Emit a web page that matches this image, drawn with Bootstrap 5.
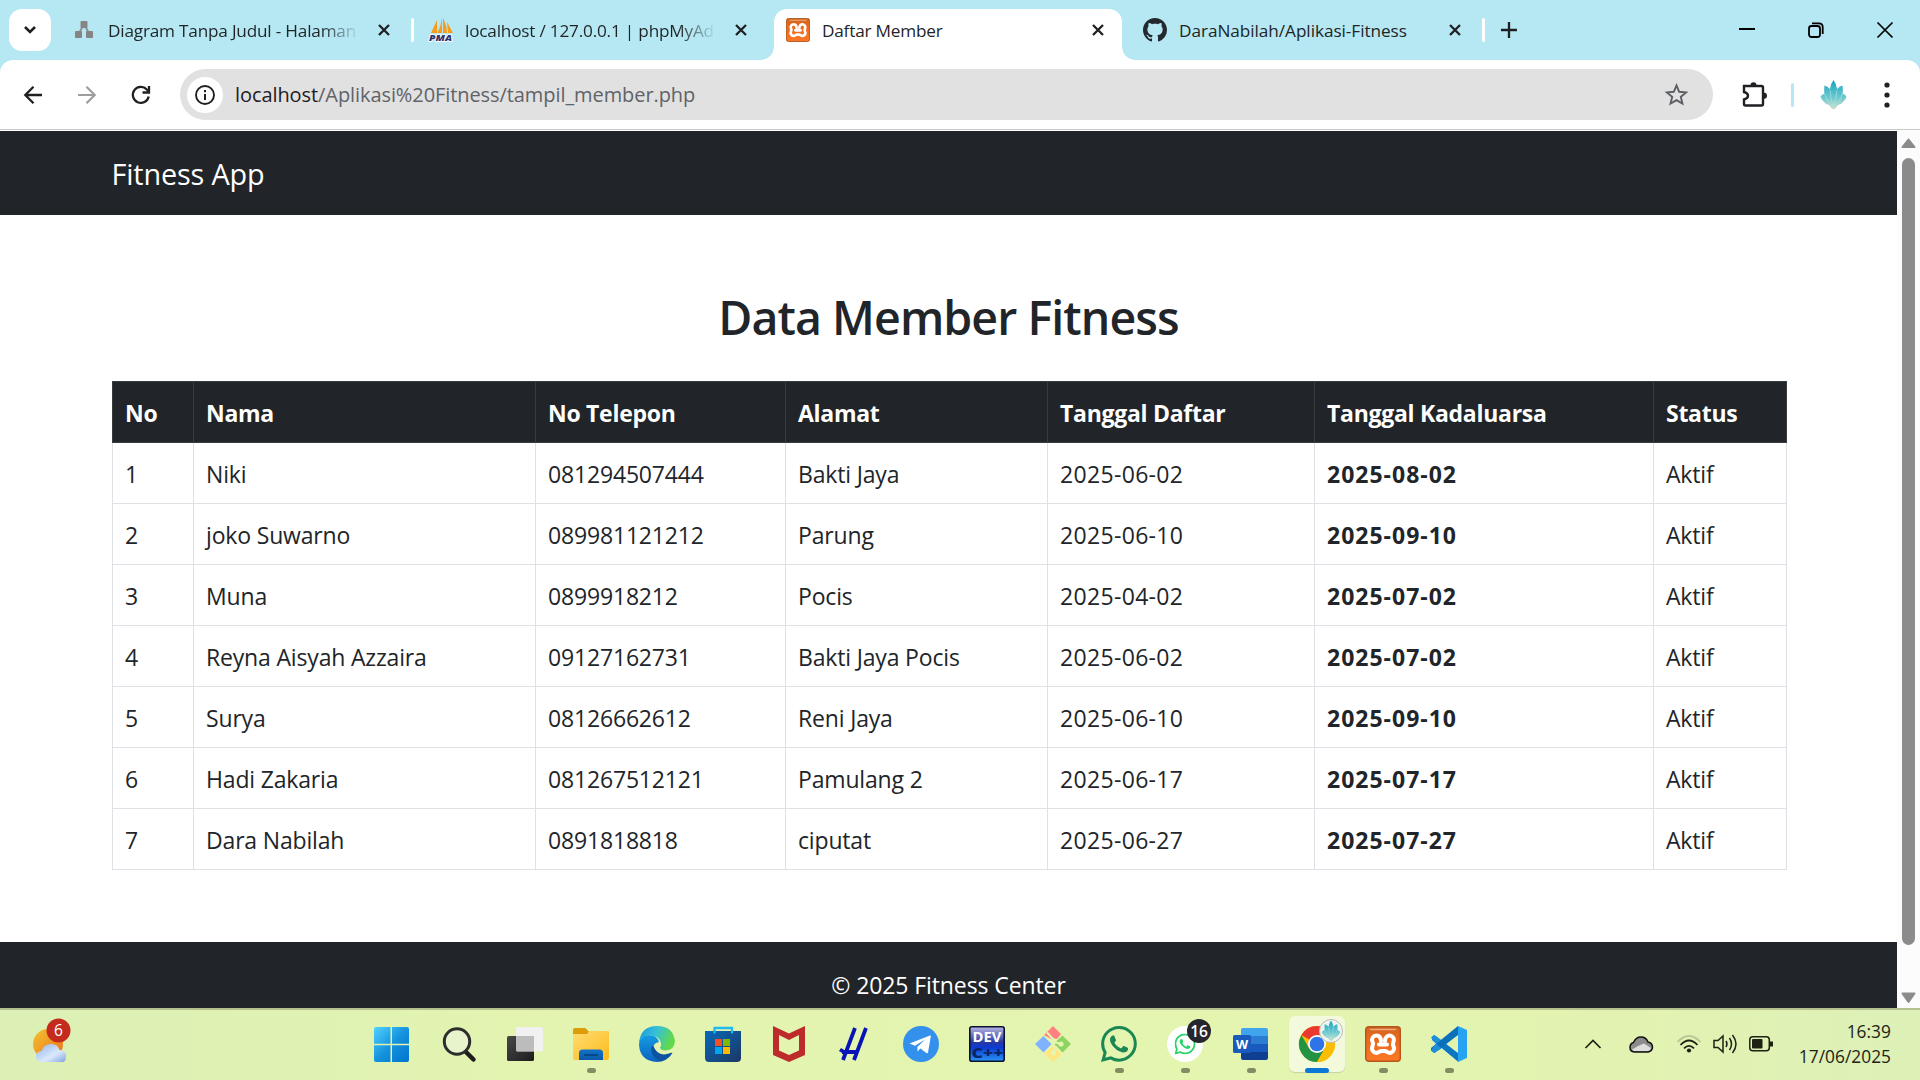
<!DOCTYPE html>
<html lang="id">
<head>
<meta charset="utf-8">
<title>Daftar Member</title>
<link href="https://cdn.jsdelivr.net/npm/bootstrap@5.3.0/dist/css/bootstrap.min.css" rel="stylesheet">
<style>
html{font-size:24px}
body{font-family:"Open Sans","Noto Sans",sans-serif;width:1920px;height:1080px;overflow:hidden;color:#212529}
svg{display:block;flex:none;overflow:visible}
.tabstrip{height:60px;background:#b5e8f2;font-size:17.2px;letter-spacing:-.2px;line-height:30px;color:#1f2427}
.tab-search{width:42px;height:42px;border-radius:13px;background:#fff;margin:9px 9px 0 9px}
.tab-item{width:357px;height:60px;padding:9px 0 9px 12px;position:relative}
.tab-face{width:24px;height:24px;margin-right:12px}
.tab-title{width:254px;overflow:hidden;white-space:nowrap;margin-top:2px}
.tab-title.repo{letter-spacing:-.05px}
.fade-end{-webkit-mask-image:linear-gradient(90deg,#000 84%,transparent 99%);mask-image:linear-gradient(90deg,#000 84%,transparent 99%)}
.tab-x{margin-left:16px}
.tab-line{width:3px;height:24px;border-radius:2px;background:#fff;margin-left:21px}
.tab-on::before{content:"";position:absolute;left:0;top:9px;width:348px;height:51px;border-radius:13px 13px 0 0;background:#fff}
.tab-on::after{content:"";position:absolute;left:-13px;bottom:0;width:374px;height:13px;background:radial-gradient(circle at 0 0,transparent 12.5px,#fff 13px) 0 0/13px 13px no-repeat,radial-gradient(circle at 13px 0,transparent 12.5px,#fff 13px) 100% 0/13px 13px no-repeat}
.tab-on>*{position:relative;z-index:1}
.toolbar-wrap{height:71px;background:#b5e8f2}
.tool-row{height:71px;background:#fff;border-radius:13px 13px 0 0;padding:9px 0 11px 24px;box-shadow:inset 0 -1px #fff,inset 0 -2px #c9c9c9}
.omni{width:1533px;height:51px;border-radius:26px;background:#e1e1e1;padding-left:7px;margin-left:30px;font-size:20px;letter-spacing:-.08px;color:#606367}
.omni-info{width:36px;height:36px;border-radius:50%;background:#fff;margin-right:12px}
.host{color:#1f2023}
.viewport{height:877px;overflow:hidden}
.site{width:1897px}
.site .container{max-width:1710px}
.site .navbar-brand{font-size:28.8px;line-height:45px;letter-spacing:-.15px}
.site-title{font-size:46.5px;line-height:57.6px;font-weight:600;letter-spacing:-.93px;margin-top:74px;margin-bottom:34px}
.member-table{table-layout:fixed;width:1674px;margin-bottom:72px;font-size:23px;line-height:36px;letter-spacing:-.17px;--bs-table-color:#212529}
.member-table>:not(caption)>*>*{padding:13px 12px 11px 12.5px}
.member-table th{letter-spacing:-.28px}
.member-table td{white-space:nowrap}
.member-table td:nth-child(5){letter-spacing:.33px}
.member-table .tgl{font-weight:700;letter-spacing:1px}
.site-foot{height:108px;font-size:23px;line-height:36px;letter-spacing:-.1px;padding-top:25px}
.sbar{width:23px;background:#fcfcfc;padding:7px 0 4px}
.sthumb{width:13px;height:787px;border-radius:7px;background:#8b8b8b;margin-top:9px}
.taskbar{height:72px;border-top:2px solid #b5c08f;background:linear-gradient(90deg,#dcf0b6,#e3f4b0 28%,#e4f5b0 65%,#e2f3b1 85%,#ddf0b7)}
.t-left{width:360px;padding:16px 0 0 33px}
.t-cell{width:66px;height:70px;padding-top:16px}
.t-cell .dot{width:9px;height:5px;border-radius:3px;background:#848c64;margin-top:6px}
.t-on{position:relative}
.t-on::before{content:"";position:absolute;left:5px;top:6px;width:56px;height:56px;border-radius:6px;background:#f3fadb;box-shadow:0 1px 1px #c7d3a1}
.t-on>*{position:relative}
.t-cell .dot-on{width:24px;background:#0a78d4}
.tray{padding:2px 29px 0 103px}
.clock{font-size:17.3px;line-height:25px;letter-spacing:.05px;width:100px;color:#1d2214;margin-top:7px;white-space:nowrap}
</style>
<script src="https://cdn.jsdelivr.net/npm/bootstrap@5.3.0/dist/js/bootstrap.bundle.min.js"></script>
</head>
<body class="d-flex flex-column">

<svg width="0" height="0" class="position-absolute">
  <defs>
    <linearGradient id="gWin" x1="0" y1="0" x2="1" y2="1"><stop offset="0" stop-color="#52d3ff"/><stop offset=".5" stop-color="#1593dd"/><stop offset="1" stop-color="#0073cf"/></linearGradient>
    <linearGradient id="gFold" x1="0" y1="0" x2="1" y2="1"><stop offset="0" stop-color="#ffdc72"/><stop offset="1" stop-color="#fcbb1c"/></linearGradient>
    <linearGradient id="gBlue" x1="0" y1="0" x2="0" y2="1"><stop offset="0" stop-color="#1273c9"/><stop offset="1" stop-color="#0a5aa6"/></linearGradient>
    <linearGradient id="gStore" x1="0" y1="0" x2="1" y2="1"><stop offset="0" stop-color="#0669b9"/><stop offset="1" stop-color="#1e3763"/></linearGradient>
    <linearGradient id="gEdge" x1="0" y1="0" x2="1" y2=".3"><stop offset="0" stop-color="#1c95dc"/><stop offset=".5" stop-color="#35c1d8"/><stop offset="1" stop-color="#62d94a"/></linearGradient>
    <linearGradient id="gEdge2" x1="0" y1="0" x2="0" y2="1"><stop offset="0" stop-color="#149ce4"/><stop offset="1" stop-color="#0d62bd"/></linearGradient>
    <linearGradient id="gDev" x1="0" y1="0" x2="0" y2="1"><stop offset="0" stop-color="#b9b7e4"/><stop offset=".45" stop-color="#27399f"/><stop offset=".6" stop-color="#0d3ad4"/><stop offset="1" stop-color="#2794f4"/></linearGradient>
    <linearGradient id="gXam" x1="0" y1="0" x2="0" y2="1"><stop offset="0" stop-color="#cc6622"/><stop offset=".3" stop-color="#e8691c"/><stop offset="1" stop-color="#fb7724"/></linearGradient>
    <linearGradient id="gSun" x1="0" y1="0" x2="1" y2="1"><stop offset="0" stop-color="#f3c431"/><stop offset="1" stop-color="#ee6e18"/></linearGradient>
    <linearGradient id="gCloud" x1="0" y1="0" x2="1" y2="1"><stop offset="0" stop-color="#8fb4ea"/><stop offset=".6" stop-color="#dbe8fb"/><stop offset="1" stop-color="#7fa4dd"/></linearGradient>
    <linearGradient id="gLot" x1="0" y1="0" x2="0" y2="1"><stop offset="0" stop-color="#1aa3bb"/><stop offset=".6" stop-color="#6bcad0"/><stop offset="1" stop-color="#d3dccb"/></linearGradient>
    <linearGradient id="gSq" x1="0" y1="0" x2="1" y2="1"><stop offset="0" stop-color="#484848"/><stop offset="1" stop-color="#1c1c1c"/></linearGradient>
    <symbol id="xmark" viewBox="0 0 12 12"><path d="M1 1l10 10M11 1L1 11" stroke="#1f2023" stroke-width="2.3" fill="none"/></symbol>
    <symbol id="xampp" viewBox="0 0 36 36"><rect x=".7" y=".7" width="34.6" height="34.6" rx="3" fill="url(#gXam)" stroke="#b5571c" stroke-width="1.4"/><path d="M4 2.800h28l-2 1.500H6z" fill="#f0a87c"/><path d="M11.500 9.500a4.300 4.300 0 0 0-4 6.200q.8 1.300.5 2.300t-.5 2.300a4.400 4.400 0 0 0 6.500 5.600q1.200-1 2.500-1h3q1.300 0 2.500 1a4.400 4.400 0 0 0 6.500-5.600q-.8-1.300-.5-2.300t.5-2.300a4.300 4.300 0 0 0-7.800-3.700q-.7 1-.7 3M11.500 9.500q4 0 4.500 5.500M14 18.500h8" fill="none" stroke="#fff" stroke-width="4" stroke-linecap="round" stroke-linejoin="round"/></symbol>
    <symbol id="lotus" viewBox="0 0 26 30"><path d="M13 0q3 4 3.600 9Q19 6 22 5.500q.6 5 .2 8.500 2-.5 3.800 2.500-.5 3-3 5-2 3-5.500 3.500L14.500 29h-3L8.500 25Q5 24.500 3 21.500q-2.500-2-3-5 1.800-3 3.800-2.500Q3.400 10.500 4 5.500 7 6 9.400 9 10 4 13 0z" fill="url(#gLot)"/><path d="M9.500 10q.5 9 3.500 17 3-8 3.500-17M4.300 14q2 8 8.700 12 6.700-4 8.700-12" fill="none" stroke="#a9e2e4" stroke-width=".7"/></symbol>
    <symbol id="wa" viewBox="0 0 16 16"><path d="M13.601 2.326A7.854 7.854 0 0 0 7.994 0C3.627 0 .068 3.558.064 7.926c0 1.399.366 2.760 1.057 3.965L0 16l4.204-1.102a7.933 7.933 0 0 0 3.790.965h.004c4.368 0 7.926-3.558 7.930-7.930A7.898 7.898 0 0 0 13.600 2.326zM7.994 14.521a6.573 6.573 0 0 1-3.356-.920l-.240-.144-2.494.654.666-2.433-.156-.251a6.560 6.560 0 0 1-1.007-3.505c0-3.626 2.957-6.584 6.591-6.584a6.560 6.560 0 0 1 4.660 1.931 6.557 6.557 0 0 1 1.928 4.660c-.004 3.639-2.961 6.592-6.592 6.592zm3.615-4.934c-.197-.099-1.170-.578-1.353-.646-.182-.065-.315-.099-.445.099-.133.197-.513.646-.627.775-.114.133-.232.148-.430.050-.197-.100-.836-.308-1.592-.985-.590-.525-.985-1.175-1.103-1.372-.114-.198-.011-.304.088-.403.087-.088.197-.232.296-.346.100-.114.133-.198.198-.330.065-.134.034-.248-.015-.347-.050-.099-.445-1.076-.612-1.470-.160-.389-.323-.335-.445-.340-.114-.007-.247-.007-.380-.007a.729.729 0 0 0-.529.247c-.182.198-.691.677-.691 1.654 0 .977.710 1.916.810 2.049.098.133 1.394 2.132 3.383 2.992.470.205.840.326 1.129.418.475.152.904.129 1.246.080.380-.058 1.171-.480 1.338-.943.164-.464.164-.860.114-.943-.049-.084-.182-.133-.380-.232z"/></symbol>
  </defs>
</svg>

<!-- browser tabs -->
<div class="tabstrip d-flex flex-shrink-0">
  <div class="tab-search d-flex align-items-center justify-content-center"><svg width="14" height="10"><path d="M2 2l5 5 5-5" fill="none" stroke="#1f2023" stroke-width="2.600"/></svg></div>
  <div class="tab-item d-flex align-items-center">
    <svg class="tab-face" viewBox="0 0 24 24"><path d="M12 6L6 17M12 6l6 11" stroke="#8a8f92" stroke-width="1.800"/><g fill="#858585"><rect x="8.500" y="3" width="7" height="7" rx="1"/><rect x="3" y="13" width="7" height="7" rx="1"/><rect x="14" y="13" width="7" height="7" rx="1"/></g></svg>
    <div class="tab-title fade-end">Diagram Tanpa Judul - Halaman</div>
    <svg class="tab-x" width="12" height="12"><use href="#xmark"/></svg><span class="tab-line"></span>
  </div>
  <div class="tab-item d-flex align-items-center">
    <svg class="tab-face" viewBox="0 0 24 24"><path d="M8 2L2 15h6zM13 0v15H8.500Q12 8 13 0zM14 0q4 8 4 15h-4zM18 4l6 11h-5z" fill="#f89c1c"/><text x="0" y="23" font-size="8.500" font-weight="800" font-style="italic" textLength="23" lengthAdjust="spacingAndGlyphs" fill="#31316b" stroke="#fff" stroke-width="1.500" paint-order="stroke" letter-spacing="0">PMA</text></svg>
    <div class="tab-title fade-end">localhost / 127.0.0.1 | phpMyAd</div>
    <svg class="tab-x" width="12" height="12"><use href="#xmark"/></svg>
  </div>
  <div class="tab-item tab-on d-flex align-items-center">
    <svg class="tab-face"><use href="#xampp"/></svg>
    <div class="tab-title">Daftar Member</div>
    <svg class="tab-x" width="12" height="12"><use href="#xmark"/></svg>
  </div>
  <div class="tab-item d-flex align-items-center">
    <svg class="tab-face" viewBox="0 0 16 16"><path fill="#24292f" d="M8 0C3.580 0 0 3.580 0 8c0 3.540 2.290 6.530 5.470 7.590.4.070.55-.170.55-.380 0-.190-.010-.820-.010-1.490-2.010.370-2.530-.490-2.690-.940-.090-.230-.480-.940-.820-1.130-.280-.150-.680-.520-.010-.530.630-.010 1.080.580 1.230.820.720 1.210 1.870.870 2.330.660.070-.520.280-.870.510-1.070-1.780-.200-3.640-.890-3.640-3.950 0-.870.310-1.590.820-2.150-.080-.200-.360-1.020.080-2.120 0 0 .670-.210 2.200.820.640-.180 1.320-.270 2-.270s1.360.090 2 .270c1.530-1.040 2.200-.820 2.200-.820.440 1.100.160 1.920.080 2.120.510.560.820 1.270.820 2.150 0 3.070-1.870 3.750-3.650 3.950.290.250.540.730.540 1.480 0 1.070-.010 1.930-.010 2.200 0 .210.150.460.550.380A8.010 8.010 0 0 0 16 8c0-4.420-3.580-8-8-8z"/></svg>
    <div class="tab-title repo">DaraNabilah/Aplikasi-Fitness</div>
    <svg class="tab-x" width="12" height="12"><use href="#xmark"/></svg><span class="tab-line"></span>
  </div>
  <div class="d-flex align-items-center flex-grow-1">
    <svg width="16" height="16" style="margin-left:13px"><path d="M8 0v16M0 8h16" stroke="#1f2023" stroke-width="2.300"/></svg>
    <div class="d-flex align-items-center ms-auto" style="gap:53px;padding-right:27px">
      <svg width="16" height="16"><path d="M0 7h16" stroke="#000" stroke-width="2"/></svg>
      <svg width="16" height="16"><rect x="1" y="4" width="11" height="11" rx="2.500" fill="none" stroke="#000" stroke-width="1.800"/><path d="M4 1.300h7q3.700 0 3.700 3.700v7" fill="none" stroke="#000" stroke-width="1.800"/></svg>
      <svg width="16" height="16"><path d="M.5.500l15 15M15.500.500l-15 15" stroke="#000" stroke-width="1.700"/></svg>
    </div>
  </div>
</div>

<!-- address bar -->
<div class="toolbar-wrap flex-shrink-0">
  <div class="tool-row d-flex align-items-center">
    <svg width="18" height="18"><path d="M18 9H1.800M9.500.800L1.300 9l8.200 8.200" fill="none" stroke="#1f2023" stroke-width="2.300"/></svg>
    <svg width="18" height="18" style="margin-left:36px"><path d="M0 9h16.200M8.500.800L16.700 9l-8.200 8.200" fill="none" stroke="#9d9d9d" stroke-width="2.200"/></svg>
    <svg width="18" height="18" style="margin-left:36px"><path d="M16.700 10.500A8 8 0 1 1 14.800 3.500L17 5.500" fill="none" stroke="#1f2023" stroke-width="2.300"/><path d="M17 0v6.500h-6.500" fill="none" stroke="#1f2023" stroke-width="2.300"/></svg>
    <div class="omni d-flex align-items-center">
      <span class="omni-info d-flex align-items-center justify-content-center"><svg width="20" height="20"><circle cx="10" cy="10" r="9" fill="none" stroke="#1f2023" stroke-width="1.900"/><path d="M10 9v6M10 5v2.200" stroke="#1f2023" stroke-width="2"/></svg></span>
      <span class="omni-url"><span class="host">localhost</span>/Aplikasi%20Fitness/tampil_member.php</span>
      <svg class="ms-auto" width="23" height="23" viewBox="0 0 24 24" style="margin-right:25px"><path d="M12 2.500l2.800 6.700 7.200.6-5.500 4.700 1.700 7L12 17.800l-6.200 3.700 1.700-7L2 9.800l7.200-.6z" fill="none" stroke="#5c5f63" stroke-width="2"/></svg>
    </div>
    <svg width="25" height="26" style="margin-left:29px"><path d="M2 4h17.500q1.500 0 1.500 1.500V22q0 1.500-1.500 1.500H3.500Q2 23.500 2 22v-4.500q4-1 4-3.700T2 10z" fill="none" stroke="#1f2023" stroke-width="2.400"/><path d="M8.500 3.500a3 3.200 0 0 1 6 0zM21 10.500a4 3.300 0 0 1 0 6.600z" fill="#1f2023"/></svg>
    <span style="width:3px;height:24px;border-radius:2px;background:#b5e8f2;margin-left:24px"></span>
    <svg width="27" height="30" style="margin-left:26px"><use href="#lotus"/></svg>
    <svg width="6" height="26" style="margin-left:37px"><g fill="#1f2023"><circle cx="3" cy="3" r="2.600"/><circle cx="3" cy="13" r="2.600"/><circle cx="3" cy="23" r="2.600"/></g></svg>
  </div>
</div>

<!-- page -->
<div class="viewport d-flex flex-shrink-0">
  <div class="site bg-white">
    <nav class="navbar navbar-dark bg-dark"><div class="container"><a class="navbar-brand" href="#">Fitness App</a></div></nav>
    <main class="container">
      <h2 class="site-title text-center">Data Member Fitness</h2>
      <table class="table table-bordered member-table">
        <colgroup><col style="width:81px"><col style="width:342px"><col style="width:250px"><col style="width:262px"><col style="width:267px"><col style="width:339px"><col style="width:133px"></colgroup>
        <thead class="table-dark"><tr><th>No</th><th>Nama</th><th>No Telepon</th><th>Alamat</th><th>Tanggal Daftar</th><th>Tanggal Kadaluarsa</th><th>Status</th></tr></thead>
        <tbody>
          <tr><td>1</td><td>Niki</td><td>081294507444</td><td>Bakti Jaya</td><td>2025-06-02</td><td class="tgl">2025-08-02</td><td>Aktif</td></tr>
          <tr><td>2</td><td>joko Suwarno</td><td>089981121212</td><td>Parung</td><td>2025-06-10</td><td class="tgl">2025-09-10</td><td>Aktif</td></tr>
          <tr><td>3</td><td>Muna</td><td>0899918212</td><td>Pocis</td><td>2025-04-02</td><td class="tgl">2025-07-02</td><td>Aktif</td></tr>
          <tr><td>4</td><td>Reyna Aisyah Azzaira</td><td>09127162731</td><td>Bakti Jaya Pocis</td><td>2025-06-02</td><td class="tgl">2025-07-02</td><td>Aktif</td></tr>
          <tr><td>5</td><td>Surya</td><td>08126662612</td><td>Reni Jaya</td><td>2025-06-10</td><td class="tgl">2025-09-10</td><td>Aktif</td></tr>
          <tr><td>6</td><td>Hadi Zakaria</td><td>081267512121</td><td>Pamulang 2</td><td>2025-06-17</td><td class="tgl">2025-07-17</td><td>Aktif</td></tr>
          <tr><td>7</td><td>Dara Nabilah</td><td>0891818818</td><td>ciputat</td><td>2025-06-27</td><td class="tgl">2025-07-27</td><td>Aktif</td></tr>
        </tbody>
      </table>
    </main>
    <footer class="site-foot bg-dark text-white text-center">© 2025 Fitness Center</footer>
  </div>
  <div class="sbar d-flex flex-column align-items-center">
    <svg width="15" height="11"><path d="M7.500 1.500L13.500 9h-12z" fill="#8b8b8b" stroke="#8b8b8b" stroke-width="2" stroke-linejoin="round"/></svg>
    <div class="sthumb"></div>
    <svg class="mt-auto" width="15" height="12"><path d="M7.500 10L13.500 1.500h-12z" fill="#8b8b8b" stroke="#8b8b8b" stroke-width="2" stroke-linejoin="round"/></svg>
  </div>
</div>

<!-- taskbar -->
<div class="taskbar d-flex flex-shrink-0">
  <div class="t-left">
    <svg width="36" height="36"><circle cx="15" cy="18" r="15" fill="url(#gSun)"/><path d="M8 36q-5-.5-5-5.500t5.500-5.500Q11 18 18 18t8.500 6q6.500 0 6.500 6.500T28 36z" fill="url(#gCloud)"/><circle cx="25.500" cy="4.500" r="12" fill="#c42b1c"/><text x="25.500" y="10" text-anchor="middle" font-size="15.500" fill="#fff">6</text></svg>
  </div>
  <div class="t-cell d-flex flex-column align-items-center"><svg width="36" height="36"><path d="M0 3q0-2 2-2h14.500v16.700H0zM18 1h15q2 0 2 2v14.700H18zM0 19.200h16.500V36H2q-2 0-2-2zM18 19.200h17V34q0 2-2 2H18z" fill="url(#gWin)" transform="translate(-1 0)"/></svg></div>
  <div class="t-cell d-flex flex-column align-items-center"><svg width="36" height="36"><path d="M24 25l8.500 8.500" stroke="#1d1d1d" stroke-width="4.500" stroke-linecap="round"/><circle cx="16" cy="15.500" r="12.700" fill="#e8f4cb" stroke="#2d2d2d" stroke-width="3"/></svg></div>
  <div class="t-cell d-flex flex-column align-items-center"><svg width="36" height="36"><rect x="0" y="10" width="27" height="25" rx="1.500" fill="url(#gSq)"/><rect x="9" y="1" width="27" height="24.500" rx="1.500" fill="#f1f1f1"/><path d="M9 10h18v15H9z" fill="#bcbcbc"/></svg></div>
  <div class="t-cell d-flex flex-column align-items-center"><svg width="36" height="36"><path d="M0 8V4q0-2 2-2h10q1 0 3 3H34v6H0z" fill="#dc9d08"/><path d="M0 8h14l2-3h19q1 0 1 1v26q0 2-2 2H2q-2 0-2-2z" fill="url(#gFold)"/><path d="M6 34v-7q0-3.500 3.500-3.500h17q3.500 0 3.500 3.500v7z" fill="url(#gBlue)"/><path d="M11 29h14" stroke="#063e7d" stroke-width="1.500"/></svg><span class="dot"></span></div>
  <div class="t-cell d-flex flex-column align-items-center"><svg width="36" height="36"><path d="M0 19Q0 9 10 9q8 0 10 7-5 1-6 5-.5 8 9 9 5 0 10-3-5 9-15 9Q1 35 0 19z" fill="url(#gEdge2)"/><path d="M0 18Q1 0 18 0q16 0 18 15-.5 9-9.500 9.500-5 0-5.500-3 2-2 .5-6Q19 9 10 9.500 1 10 0 18z" fill="url(#gEdge)"/><path d="M14 19q-4 5 .5 11 4 5 8 5 7-2 11-8-1-.5-2 0-13 5-17.500-8z" fill="#0e539f"/></svg></div>
  <div class="t-cell d-flex flex-column align-items-center"><svg width="36" height="36"><path d="M9.500 8V2h17.500v6" fill="none" stroke="#22b9f2" stroke-width="2.300"/><path d="M0 5h36v27q0 4-4 4H4q-4 0-4-4z" fill="url(#gStore)"/><path d="M9.500 4.500v3M27 4.500v3" stroke="#22b9f2" stroke-width="2"/><path d="M10 13h7v7h-7z" fill="#f25022"/><path d="M18 13h7v7h-7z" fill="#7fba00"/><path d="M10 21h7v7h-7z" fill="#00a4ef"/><path d="M18 21h7v7h-7z" fill="#ffb900"/></svg></div>
  <div class="t-cell d-flex flex-column align-items-center"><svg width="36" height="36"><path d="M2 0l16 7.500L34 0v29l-16 7-16-7zm6 9v15.500l10 4.500 10-4.500V9l-10 5z" fill="#bd2b2b" fill-rule="evenodd"/></svg></div>
  <div class="t-cell d-flex flex-column align-items-center"><svg width="36" height="36"><path d="M18 2L6 34M29 2L17 34M5 26h14M3 23.500l4 2.500" fill="none" stroke="#0814b8" stroke-width="3.800"/></svg></div>
  <div class="t-cell d-flex flex-column align-items-center"><svg width="36" height="36"><circle cx="18" cy="18" r="18" fill="#3390ec"/><path d="M6.500 17.500L27 9.500q1-.3.800 1L25 26.500q-.4 1.200-1.600.5l-6-4.500-2.800 3-.3-4.500L22 13.500l-10 6.300z" fill="#fff"/></svg></div>
  <div class="t-cell d-flex flex-column align-items-center"><svg width="36" height="36"><rect x=".8" y=".8" width="34.400" height="34.400" rx="2" fill="url(#gDev)" stroke="#0b1230" stroke-width="1.600"/><text x="3.500" y="16" textLength="29" lengthAdjust="spacingAndGlyphs" font-size="14" font-weight="700" fill="#fff">DEV</text><text x="2.500" y="31.500" textLength="32" lengthAdjust="spacingAndGlyphs" font-size="14" font-weight="800" fill="#0b2566">C++</text></svg></div>
  <div class="t-cell d-flex flex-column align-items-center"><svg width="36" height="36"><path d="M18 0l8 8-4 5q-4-1-4 1l-9-5z" fill="#ff8080"/><path d="M8.500 10l8 8-8 8.500L0 18z" fill="#80b3ff"/><path d="M27.500 9.500L36 18l-8.500 8.500-6-6.500q-2 0-3-3 3-1 4-3z" fill="#8dd35f"/><path d="M18 20l8.500 8L18 36l-8.500-8.500z" fill="#ffe680"/><path d="M12 6.500l7 7.500v13M19 16l7 2" fill="none" stroke="#e4f5b0" stroke-width="2"/><circle cx="19" cy="15" r="2.600" fill="#e4f5b0"/><circle cx="26" cy="18" r="2.600" fill="#e4f5b0"/><circle cx="18.500" cy="27" r="2.600" fill="#e4f5b0"/></svg></div>
  <div class="t-cell d-flex flex-column align-items-center"><svg width="36" height="36" fill="#1a8755"><use href="#wa"/></svg><span class="dot"></span></div>
  <div class="t-cell d-flex flex-column align-items-center"><svg width="36" height="36"><circle cx="18" cy="18" r="18" fill="#fff"/><use href="#wa" x="7.500" y="7.500" width="21" height="21" fill="#25d366"/><circle cx="32" cy="5" r="12" fill="#25262e"/><text x="32" y="10.500" text-anchor="middle" font-size="15.500" font-weight="600" fill="#fff">16</text></svg><span class="dot"></span></div>
  <div class="t-cell d-flex flex-column align-items-center"><svg width="36" height="36"><path d="M8 4q0-2 2-2h23q2 0 2 2v6H8z" fill="#41a5ee"/><path d="M8 10h27v8H8z" fill="#2b7cd3"/><path d="M8 18h27v8H8z" fill="#185abd"/><path d="M8 26h27v6q0 2-2 2H10q-2 0-2-2z" fill="#103f91"/><rect x="0" y="9" width="18" height="18" rx="1.500" fill="#185abd"/><text x="9" y="22.500" text-anchor="middle" font-size="12.500" font-weight="700" fill="#fff">W</text></svg><span class="dot"></span></div>
  <div class="t-cell t-on d-flex flex-column align-items-center"><svg width="36" height="36"><circle cx="18" cy="18" r="18" fill="#fbbc04"/><path d="M18 18L2.400 9A18 18 0 0 1 33.600 9H18z" fill="#ea3a2e"/><path d="M2.400 9A18 18 0 0 0 18 36l7.800-13.500L10.200 22.500z" fill="#229342"/><path d="M18 9h15.600A18 18 0 0 1 18 36l8-14z" fill="#fbbc04"/><circle cx="18" cy="18" r="9" fill="#fff"/><circle cx="18" cy="18" r="7.300" fill="#2f73e8"/><circle cx="32" cy="5" r="11.500" fill="#eef4ee" stroke="#b9bdb4"/><use href="#lotus" x="21.500" y="-5.500" width="21" height="21"/></svg><span class="dot dot-on"></span></div>
  <div class="t-cell d-flex flex-column align-items-center"><svg width="36" height="36"><use href="#xampp"/></svg><span class="dot"></span></div>
  <div class="t-cell d-flex flex-column align-items-center"><svg width="36" height="36"><path d="M1 11.500L3.500 9l24 18.500V36L1 14z" fill="#0b76c4"/><path d="M27 0v9L3.500 27 0 24.500v-2.500z" fill="#0c6fba"/><path d="M0 11.500l3-2.500 7 5-4.500 4 5 4.500L3 27l-3-2.500 5-6.500z" fill="#1f8fd8"/><path d="M27 0l9 4v28l-9 4z" fill="#26a3f3"/></svg><span class="dot"></span></div>
  <div class="tray d-flex">
    <svg width="16" height="10" style="margin-top:27px"><path d="M.5 9L8 1.500 15.500 9" fill="none" stroke="#1d2214" stroke-width="1.700"/></svg>
    <svg width="24" height="17" style="margin:24px 0 0 28px"><path d="M5.500 16Q1 15.500 1 11.500 1 7.500 4.500 6.500 7 1 12 1q5 0 7 5 4.500 1 4.500 5T19 16z" fill="#8c8c8c" stroke="#111" stroke-width="1.500"/><path d="M3 13.500Q8 10 15 7.500l7 4.500q-1 3-3 3H6q-2 0-3-1.500z" fill="#dedede"/></svg>
    <svg width="24" height="18" style="margin:23px 0 0 24px"><g fill="none" stroke-width="1.800"><path d="M.5 7Q12-5 23.500 7" stroke="#b9c698"/><path d="M3.500 10Q12 1 20.500 10M7 13.300q5-5 10 0" stroke="#1d2214"/></g><circle cx="12" cy="15.500" r="2.100" fill="#1d2214"/></svg>
    <svg width="24" height="20" style="margin:22px 0 0 12px"><g fill="none" stroke="#1d2214" stroke-width="1.500"><path d="M1 6.500h4L10 2v16l-5-4.500H1z"/><path d="M13 7q2 3 0 6M16.500 4q4 6 0 12M19.500 1q7 9 0 18"/></g></svg>
    <svg width="24" height="16" style="margin:24px 0 0 12px"><rect x=".8" y=".8" width="19.500" height="14" rx="3" fill="none" stroke="#1d2214" stroke-width="1.500"/><rect x="3" y="3" width="10.500" height="9.500" rx="1" fill="#1d2214"/><path d="M21 5.500h3v5h-3z" fill="#1d2214"/></svg>
    <div class="clock text-end" style="margin-left:18px">16:39<br>17/06/2025</div>
  </div>
</div>
</body>
</html>
